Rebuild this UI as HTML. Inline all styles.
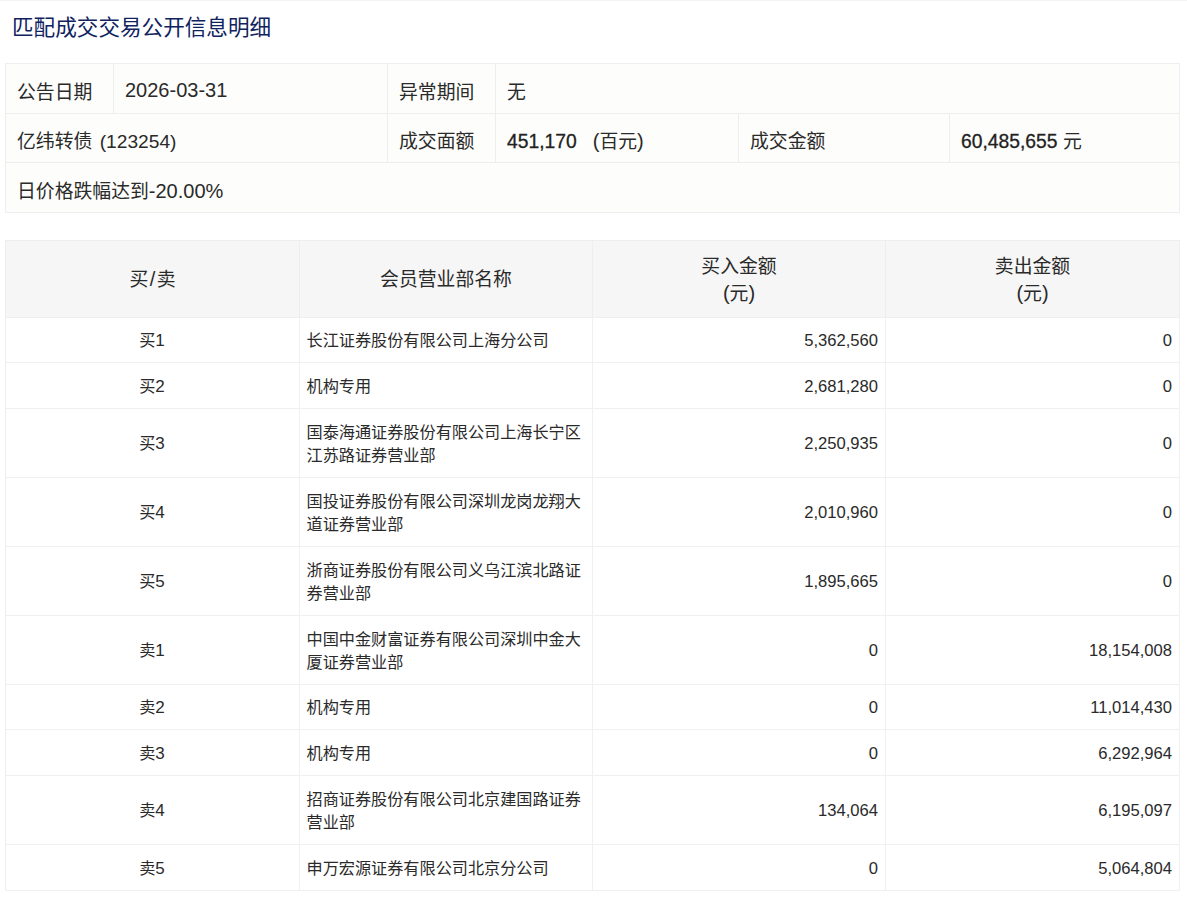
<!DOCTYPE html>
<html lang="zh-CN">
<head>
<meta charset="utf-8">
<title>匹配成交交易公开信息明细</title>
<style>
html,body{margin:0;padding:0;background:#fff}
body{width:1187px;height:900px;overflow:hidden;position:relative;
  font-family:"Liberation Sans","Noto Sans CJK SC",sans-serif;color:#2a2a2a;}
body:before{content:"";position:absolute;left:0;top:0;width:100%;height:1px;background:#f4f4f4}
.cj{font-family:"Liberation Sans","Noto Sans CJK SC",sans-serif;white-space:nowrap}
h1.title{position:absolute;left:12px;top:16px;margin:0;font-size:21.6px;line-height:24px;
  font-weight:normal;color:#10235f;white-space:nowrap}
table{border-collapse:separate;border-spacing:0;table-layout:fixed;position:absolute;left:5px;width:1175px}
td,th{box-sizing:border-box;padding:0;font-weight:normal;vertical-align:middle;white-space:nowrap}
table.info{top:63px;font-size:20px;background:#fdfdfb;border-top:1px solid #eeeeee;border-left:1px solid #eeeeee}
table.info td{border-right:1px solid #eeeeee;border-bottom:1px solid #eeeeee;padding-left:11px;padding-top:3px;text-align:left}
table.info .cj{font-size:18.83px}
table.info .gap{display:inline-block;width:16px}
table.list{top:240px;font-size:16.15px;border-top:1px solid #eeeeee;border-left:1px solid #eeeeee}
table.list th{background:#f6f6f6;font-size:20px;line-height:26.5px;padding-top:2px;text-align:center;
  border-right:1px solid #eeeeee;border-bottom:1px solid #eeeeee}
table.list td{border-right:1px solid #f0f0f0;border-bottom:1px solid #f0f0f0;line-height:23px;padding-top:1.6px}
table.list td.c{text-align:center;font-size:17px;padding-right:1px}
table.list td.n{text-align:left;padding-left:6.5px}
table.list td .cj{font-size:16.15px}
table.list td.r{text-align:right;padding-right:7px;font-size:16.6px}
table.info .b{font-size:19.3px;color:#222;-webkit-text-stroke:0.3px #222}
table.info td.ws{word-spacing:2px;font-size:19.2px}
table.list th .cj{font-size:18.83px}
table.list th .sl{padding:0 1.5px}

</style>
</head>
<body>

<h1 class="title"><span class="cj">匹配成交交易公开信息明细</span></h1>

<table class="info">
<colgroup><col style="width:108px"><col style="width:274px"><col style="width:108px"><col style="width:243px"><col style="width:211px"><col style="width:230px"></colgroup>
<tr style="height:50px"><td><span class="cj">公告日期</span></td><td class="d1">2026-03-31</td><td><span class="cj">异常期间</span></td><td colspan="3"><span class="cj">无</span></td></tr>
<tr style="height:49px"><td colspan="2" class="ws"><span class="cj">亿纬转债</span> (123254)</td><td><span class="cj">成交面额</span></td><td><span class="b">451,170</span><span class="gap"></span>(<span class="cj">百元</span>)</td><td><span class="cj">成交金额</span></td><td><span class="b">60,485,655</span> <span class="cj">元</span></td></tr>
<tr style="height:50px"><td colspan="6"><span class="cj">日价格跌幅达到</span>-20.00%</td></tr>
</table>

<table class="list">
<colgroup><col style="width:294px"><col style="width:293px"><col style="width:293px"><col style="width:294px"></colgroup>
<thead><tr style="height:77px"><th><span class="cj">买</span><span class="sl">/</span><span class="cj">卖</span></th><th><span class="cj">会员营业部名称</span></th><th><span class="cj">买入金额</span><br>(<span class="cj">元</span>)</th><th><span class="cj">卖出金额</span><br>(<span class="cj">元</span>)</th></tr></thead>
<tbody>
<tr style="height:45px"><td class="c"><span class="cj">买</span>1</td><td class="n"><span class="cj">长江证券股份有限公司上海分公司</span></td><td class="r">5,362,560</td><td class="r">0</td></tr>
<tr style="height:46px"><td class="c"><span class="cj">买</span>2</td><td class="n"><span class="cj">机构专用</span></td><td class="r">2,681,280</td><td class="r">0</td></tr>
<tr style="height:69px"><td class="c"><span class="cj">买</span>3</td><td class="n"><span class="cj">国泰海通证券股份有限公司上海长宁区</span><br><span class="cj">江苏路证券营业部</span></td><td class="r">2,250,935</td><td class="r">0</td></tr>
<tr style="height:69px"><td class="c"><span class="cj">买</span>4</td><td class="n"><span class="cj">国投证券股份有限公司深圳龙岗龙翔大</span><br><span class="cj">道证券营业部</span></td><td class="r">2,010,960</td><td class="r">0</td></tr>
<tr style="height:69px"><td class="c"><span class="cj">买</span>5</td><td class="n"><span class="cj">浙商证券股份有限公司义乌江滨北路证</span><br><span class="cj">券营业部</span></td><td class="r">1,895,665</td><td class="r">0</td></tr>
<tr style="height:69px"><td class="c"><span class="cj">卖</span>1</td><td class="n"><span class="cj">中国中金财富证券有限公司深圳中金大</span><br><span class="cj">厦证券营业部</span></td><td class="r">0</td><td class="r">18,154,008</td></tr>
<tr style="height:45px"><td class="c"><span class="cj">卖</span>2</td><td class="n"><span class="cj">机构专用</span></td><td class="r">0</td><td class="r">11,014,430</td></tr>
<tr style="height:46px"><td class="c"><span class="cj">卖</span>3</td><td class="n"><span class="cj">机构专用</span></td><td class="r">0</td><td class="r">6,292,964</td></tr>
<tr style="height:69px"><td class="c"><span class="cj">卖</span>4</td><td class="n"><span class="cj">招商证券股份有限公司北京建国路证券</span><br><span class="cj">营业部</span></td><td class="r">134,064</td><td class="r">6,195,097</td></tr>
<tr style="height:46px"><td class="c"><span class="cj">卖</span>5</td><td class="n"><span class="cj">申万宏源证券有限公司北京分公司</span></td><td class="r">0</td><td class="r">5,064,804</td></tr>
</tbody>
</table>

</body>
</html>
